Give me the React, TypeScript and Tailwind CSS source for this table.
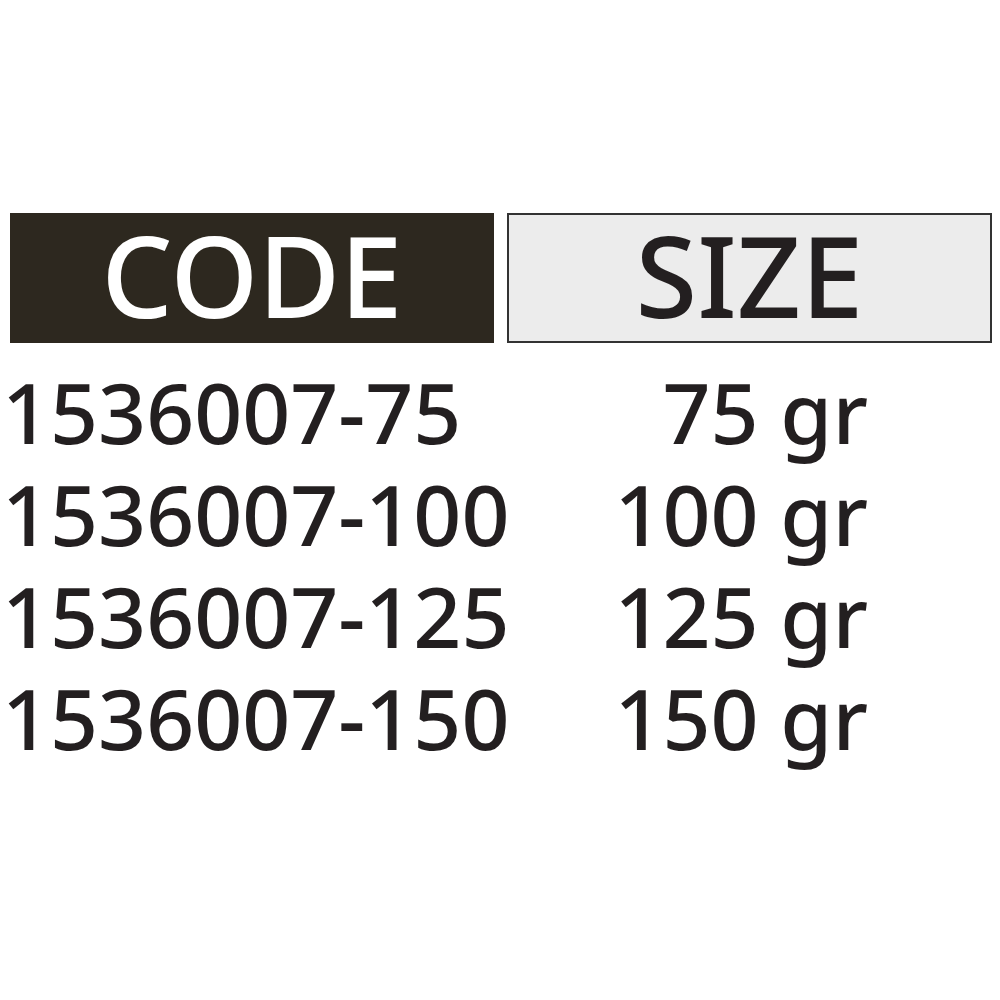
export default function App() {
  const rows = [
    ["1536007-75", "75 gr"],
    ["1536007-100", "100 gr"],
    ["1536007-125", "125 gr"],
    ["1536007-150", "150 gr"],
  ];
  return (
    <div className="w-[1000px] h-[1000px] bg-white pt-[213px] text-[#231f20]" style={{ fontFamily: '"Noto Sans", "Open Sans", sans-serif' }}>
      <div className="flex pl-[10px] gap-[13px]">
        <div className="w-[484px] h-[130px] bg-[#2d281f] flex items-center justify-center text-white text-[112px] font-medium leading-none pb-[6px]">
          CODE
        </div>
        <div className="w-[485px] h-[130px] bg-[#ececec] border-2 border-[#333] flex items-center justify-center text-[#231f20] text-[112px] font-medium leading-none pb-[6px]">
          SIZE
        </div>
      </div>
      <div className="mt-[18px] flex flex-col">
        {rows.map(([c, s]) => (
          <div key={c} className="grid grid-cols-[520px_348px] h-[102px] text-[84px] leading-[102px] font-medium whitespace-nowrap">
            <div className="pl-[2px]">{c}</div>
            <div className="text-right">{s}</div>
          </div>
        ))}
      </div>
    </div>
  );
}
